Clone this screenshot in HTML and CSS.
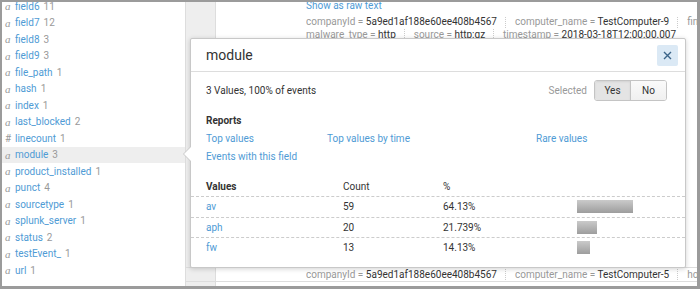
FILE: index.html
```html
<!DOCTYPE html>
<html lang="en">
<head>
  <meta charset="UTF-8" />
  <meta name="viewport" content="width=device-width, initial-scale=1.0" />
  <title>Search - fields</title>
  <link rel="stylesheet" href="styles.css">
</head>
<body>
  <div class="frame">
    <aside class="fields">
      <ul class="field-list">
        <li class="field"><span class="type">a</span><span class="name">field6</span><span class="count">11</span></li>
        <li class="field"><span class="type">a</span><span class="name">field7</span><span class="count">12</span></li>
        <li class="field"><span class="type">a</span><span class="name">field8</span><span class="count">3</span></li>
        <li class="field"><span class="type">a</span><span class="name">field9</span><span class="count">3</span></li>
        <li class="field"><span class="type">a</span><span class="name">file_path</span><span class="count">1</span></li>
        <li class="field"><span class="type">a</span><span class="name">hash</span><span class="count">1</span></li>
        <li class="field"><span class="type">a</span><span class="name">index</span><span class="count">1</span></li>
        <li class="field"><span class="type">a</span><span class="name">last_blocked</span><span class="count">2</span></li>
        <li class="field"><span class="type num">#</span><span class="name">linecount</span><span class="count">1</span></li>
        <li class="field is-active"><span class="type">a</span><span class="name">module</span><span class="count">3</span></li>
        <li class="field"><span class="type">a</span><span class="name">product_installed</span><span class="count">1</span></li>
        <li class="field"><span class="type">a</span><span class="name">punct</span><span class="count">4</span></li>
        <li class="field"><span class="type">a</span><span class="name">sourcetype</span><span class="count">1</span></li>
        <li class="field"><span class="type">a</span><span class="name">splunk_server</span><span class="count">1</span></li>
        <li class="field"><span class="type">a</span><span class="name">status</span><span class="count">2</span></li>
        <li class="field"><span class="type">a</span><span class="name">testEvent_</span><span class="count">1</span></li>
        <li class="field"><span class="type">a</span><span class="name">url</span><span class="count">1</span></li>
      </ul>
    </aside>

    <section class="events">
      <div class="event event-top">
        <div class="gutter"></div>
        <div class="time"></div>
        <div class="raw">
          <a class="raw-link" href="#">Show as raw text</a>
          <div class="pairs">
            <div class="pair-line">
              <span class="pair"><span class="key">companyId = </span><span class="val">5a9ed1af188e60ee408b4567</span></span>
              <span class="sep"></span>
              <span class="pair"><span class="key">computer_name = </span><span class="val">TestComputer-9</span></span>
              <span class="sep"></span>
              <span class="pair"><span class="key">final_action = </span><span class="val">blocked</span></span>
            </div>
            <div class="pair-line">
              <span class="pair"><span class="key">malware_type = </span><span class="val">http</span></span>
              <span class="sep"></span>
              <span class="pair"><span class="key">source = </span><span class="val">http:gz</span></span>
              <span class="sep"></span>
              <span class="pair"><span class="key">timestamp = </span><span class="val">2018-03-18T12:00:00.007</span></span>
            </div>
          </div>
        </div>
      </div>
      <div class="event event-bottom">
        <div class="gutter"></div>
        <div class="time"></div>
        <div class="raw">
          <div class="pair-line">
            <span class="pair"><span class="key">companyId = </span><span class="val">5a9ed1af188e60ee408b4567</span></span>
            <span class="sep"></span>
            <span class="pair"><span class="key">computer_name = </span><span class="val">TestComputer-5</span></span>
            <span class="sep"></span>
            <span class="pair"><span class="key">host = </span><span class="val">localhost</span></span>
          </div>
        </div>
      </div>
      <div class="event event-next">
        <div class="gutter"></div>
      </div>
    </section>

    <div class="popover">
      <div class="pop-head">
        <h2 class="pop-title">module</h2>
        <button class="close" aria-label="Close">
          <svg width="9" height="9" viewBox="0 0 9 9"><path d="M1 1L8 8M8 1L1 8" stroke="#3b6488" stroke-width="1.4" fill="none"/></svg>
        </button>
      </div>

      <div class="pop-summary">
        <span>3 Values, 100% of events</span>
        <div class="selected">
          <span class="selected-label">Selected</span>
          <div class="toggle">
            <button class="toggle-btn is-on">Yes</button>
            <button class="toggle-btn">No</button>
          </div>
        </div>
      </div>

      <div class="reports">
        <div class="reports-title">Reports</div>
        <div class="report-links">
          <a href="#">Top values</a>
          <a href="#">Top values by time</a>
          <a href="#">Rare values</a>
          <a href="#">Events with this field</a>
        </div>
      </div>

      <div class="values">
        <div class="values-row values-head">
          <span class="c-name">Values</span>
          <span class="c-count">Count</span>
          <span class="c-pct">%</span>
          <span class="c-bar"></span>
        </div>
        <div class="values-row">
          <a class="c-name" href="#">av</a>
          <span class="c-count">59</span>
          <span class="c-pct">64.13%</span>
          <span class="c-bar"><span class="bar" style="width:56px"></span></span>
        </div>
        <div class="values-row">
          <a class="c-name" href="#">aph</a>
          <span class="c-count">20</span>
          <span class="c-pct">21.739%</span>
          <span class="c-bar"><span class="bar" style="width:20px"></span></span>
        </div>
        <div class="values-row">
          <a class="c-name" href="#">fw</a>
          <span class="c-count">13</span>
          <span class="c-pct">14.13%</span>
          <span class="c-bar"><span class="bar" style="width:13px"></span></span>
        </div>
      </div>
    </div>
  </div>
</body>
</html>
```

FILE: styles.css
```css
body {
  margin: 0;
  font-family: Roboto, "Liberation Sans", sans-serif;
  font-size: 10px;
  color: #333;
  background: #fff;
}
a {
  color: #4f9bd5;
  text-decoration: none;
}
.frame {
  position: relative;
  width: 700px;
  height: 289px;
  box-sizing: border-box;
  border: solid #9b9b9b;
  border-width: 2px 3px 3px 2px;
  display: flex;
  overflow: hidden;
}

/* field sidebar */
.fields {
  width: 184px;
  flex: none;
  box-sizing: border-box;
  border-right: 1px solid #ddd;
  overflow: hidden;
}
.field-list {
  list-style: none;
  margin: -4px 0 0;
  padding: 0;
}
.field {
  display: flex;
  align-items: center;
  height: 16.5px;
  padding-left: 3px;
  white-space: nowrap;
}
.field.is-active {
  background: #eee;
}
.field .type {
  width: 10px;
  font-family: "Liberation Serif", serif;
  font-style: italic;
  font-size: 11px;
  color: #999;
}
.field .type.num {
  font-family: Roboto, sans-serif;
  font-style: normal;
  font-size: 10px;
}
.field .name {
  color: #4f9bd5;
}
.field .count {
  color: #999;
  margin-left: 4px;
}

/* events */
.events {
  flex: 1;
  min-width: 0;
  display: flex;
  flex-direction: column;
}
.event {
  display: flex;
  border-bottom: 1px solid #ddd;
}
.event-top {
  flex: 1;
}
.event-bottom {
  height: 13px;
}
.event-next {
  height: 4px;
  border-bottom: 0;
}
.gutter {
  width: 29px;
  flex: none;
  background: #eee;
  border-right: 1px solid #ddd;
}
.time {
  width: 90px;
  flex: none;
}
.raw {
  flex: 1;
  min-width: 0;
  overflow: hidden;
}
.event-top .raw {
  margin-top: -3px;
}
.raw-link {
  display: block;
  line-height: 14px;
}
.pairs {
  margin-top: 3px;
}
.pair-line {
  display: flex;
  align-items: center;
  white-space: nowrap;
  line-height: 12.5px;
}
.event-bottom .pair-line {
  line-height: 13px;
}
.key {
  color: #999;
  white-space: pre;
}
.val {
  color: #333;
}
.sep {
  flex: none;
  height: 11px;
  border-left: 1px dotted #ccc;
  margin: 0 9px 0 8px;
}

/* field popover */
.popover {
  position: absolute;
  left: 188px;
  top: 36px;
  width: 496px;
  height: 230px;
  box-sizing: border-box;
  background: #fff;
  border: 1px solid #c8c8c8;
  border-radius: 2px;
  box-shadow: 0 1px 5px rgba(0,0,0,0.18);
}
.popover::before,
.popover::after {
  content: "";
  position: absolute;
  width: 0;
  height: 0;
  border-style: solid;
  border-color: transparent;
  border-left-width: 0;
}
.popover::before {
  left: -8px;
  top: 107px;
  border-width: 8px 8px 8px 0;
  border-right-color: #c8c8c8;
}
.popover::after {
  left: -7px;
  top: 108px;
  border-width: 7px 7px 7px 0;
  border-right-color: #fff;
}
.pop-head {
  height: 32px;
  display: flex;
  align-items: center;
  justify-content: space-between;
  padding: 0 7px 0 15px;
  border-bottom: 1px solid #ddd;
}
.pop-title {
  margin: 0;
  font-size: 14px;
  font-weight: normal;
  color: #333;
}
.close {
  width: 21px;
  height: 21px;
  padding: 0;
  border: 0;
  border-radius: 2px;
  background: #dbe9f5;
  display: flex;
  align-items: center;
  justify-content: center;
}
.pop-summary {
  display: flex;
  align-items: center;
  justify-content: space-between;
  height: 21px;
  margin: 8px 18px 0 15px;
}
.selected {
  display: flex;
  align-items: center;
  gap: 7px;
}
.selected-label {
  color: #999;
}
.toggle {
  display: flex;
  height: 21px;
  box-sizing: border-box;
  border: 1px solid #c4c4c4;
  border-radius: 3px;
  overflow: hidden;
}
.toggle-btn {
  font-family: Roboto, sans-serif;
  font-size: 10px;
  color: #333;
  border: 0;
  padding: 0;
  width: 35px;
  background: linear-gradient(#fafafa, #f0f0f0);
}
.toggle-btn.is-on {
  width: 36px;
  border-right: 1px solid #c4c4c4;
  background: #e4e4e4;
  box-shadow: inset 0 1px 2px rgba(0,0,0,0.08);
}
.reports {
  margin: 12px 15px 0;
}
.reports-title {
  font-weight: bold;
  line-height: 16px;
}
.report-links {
  display: grid;
  grid-template-columns: 121px 209px 1fr;
  grid-auto-rows: 18px;
  align-items: center;
}
.values {
  margin-top: 11px;
}
.values-row {
  display: flex;
  align-items: center;
  height: 19.5px;
}
.values-head {
  height: 20px;
}
.values-row + .values-row {
  border-top: 1px dashed #ccc;
}
.c-name {
  width: 152px;
  padding-left: 15px;
  box-sizing: border-box;
}
.values-head .c-name {
  font-weight: bold;
}
.c-count {
  width: 100px;
}
.c-pct {
  width: 134px;
}
.c-bar {
  flex: 1;
}
.bar {
  display: block;
  height: 13px;
  background: linear-gradient(#cacaca, #9d9d9d);
}
```
